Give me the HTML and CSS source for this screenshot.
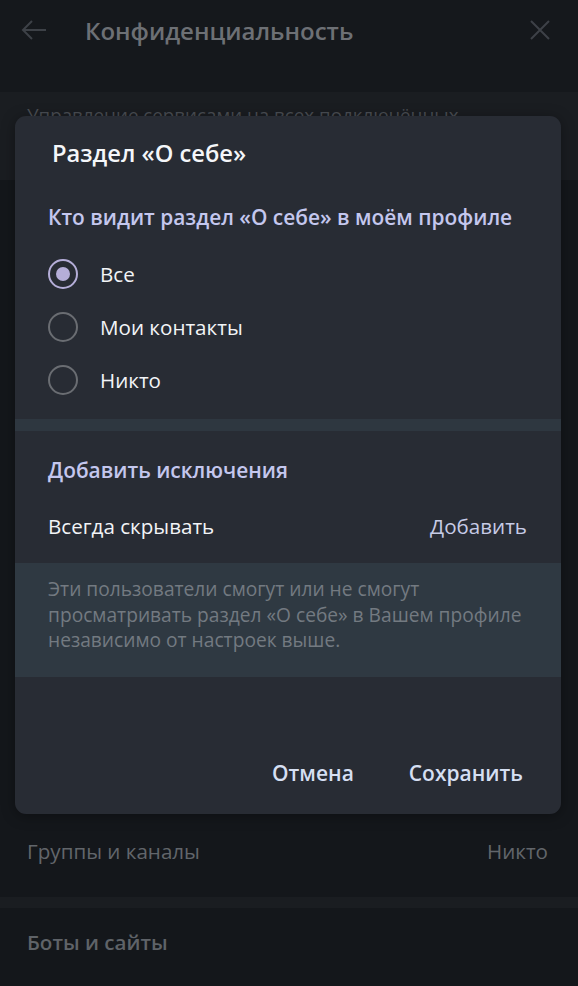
FILE: index.html
```html
<!DOCTYPE html>
<html lang="ru">
<head>
<meta charset="utf-8">
<title>Конфиденциальность</title>
<link rel="stylesheet" href="styles.css">
</head>
<body>
<div class="page">
  <header class="topbar">
    <svg class="icon back" width="26" height="22" viewBox="0 0 26 22"><path d="M25 11H2M11 2L2 11l9 9" fill="none" stroke="#3d4147" stroke-width="2"/></svg>
    <div class="topbar-title">Конфиденциальность</div>
    <svg class="icon close" width="20" height="20" viewBox="0 0 20 20"><path d="M1 1L19 19M19 1L1 19" fill="none" stroke="#3d4147" stroke-width="2"/></svg>
  </header>
  <div class="spacer"></div>
  <section class="band">
    <p class="band-text">Управление сервисами на всех подключённых</p>
  </section>
  <section class="list">
    <div class="list-row">
      <span>Группы и каналы</span>
      <span class="list-value">Никто</span>
    </div>
  </section>
  <div class="sep"></div>
  <section class="bots">
    <div class="bots-title">Боты и сайты</div>
  </section>
</div>

<div class="dialog">
  <h2 class="dialog-title">Раздел «О себе»</h2>
  <div class="section-label first">Кто видит раздел «О себе» в моём профиле</div>
  <div class="radios">
    <div class="radio-row"><span class="radio checked"></span><span>Все</span></div>
    <div class="radio-row"><span class="radio"></span><span>Мои контакты</span></div>
    <div class="radio-row"><span class="radio"></span><span>Никто</span></div>
  </div>
  <div class="divider"></div>
  <div class="section-label second">Добавить исключения</div>
  <div class="exc-row">
    <span>Всегда скрывать</span>
    <span class="exc-action">Добавить</span>
  </div>
  <div class="info">Эти пользователи смогут или не смогут просматривать раздел «О себе» в Вашем профиле независимо от настроек выше.</div>
  <div class="buttons">
    <span class="btn">Отмена</span>
    <span class="btn">Сохранить</span>
  </div>
</div>
</body>
</html>
```

FILE: styles.css
```css
* { box-sizing: border-box; }
html, body { margin: 0; padding: 0; }
body {
  width: 578px;
  height: 986px;
  overflow: hidden;
  background: #14171b;
  font-family: "Open Sans", "DejaVu Sans", sans-serif;
  position: relative;
}
.page {
  display: flex;
  flex-direction: column;
  height: 986px;
}
.topbar {
  height: 60px;
  display: flex;
  align-items: center;
  padding: 0 28px 0 21px;
  background: #15181c;
}
.topbar .back { flex: none; }
.topbar-title {
  margin-left: 38px;
  flex: 1;
  font-size: 24px;
  font-weight: 600;
  color: #6d7075;
}
.spacer { height: 32px; background: #15181c; }
.band {
  height: 88px;
  background: #1a1d21;
  padding: 10px 40px 0 27px;
}
.band-text {
  margin: 0;
  font-size: 18.75px;
  line-height: 26px;
  color: #4a4e54;
  white-space: nowrap;
}
.list {
  flex: 1;
  display: flex;
  flex-direction: column;
  justify-content: flex-end;
  background: #14171b;
  padding-bottom: 33px;
}
.list-row {
  display: flex;
  justify-content: space-between;
  padding: 0 30px 0 27px;
  font-size: 20.6px;
  color: #62666b;
  line-height: 26px;
}
.sep { height: 11px; background: #1a1d21; }
.bots {
  height: 78px;
  padding: 21px 27px 0;
}
.bots-title {
  font-size: 20.6px;
  font-weight: 600;
  color: #5f6368;
  line-height: 26px;
}
.dialog {
  position: absolute;
  left: 15px;
  top: 116px;
  width: 546px;
  height: 698px;
  background: #282c34;
  border-radius: 11px;
  box-shadow: 0 2px 14px rgba(0, 0, 0, 0.35);
  display: flex;
  flex-direction: column;
  overflow: hidden;
}
.dialog-title {
  margin: 23px 0 0 37px;
  font-size: 23.7px;
  font-weight: 600;
  line-height: 28px;
  color: #f4f6f9;
}
.section-label {
  padding-left: 33px;
  font-size: 20.9px;
  font-weight: 600;
  line-height: 24px;
  color: #c4c7ee;
}
.section-label.first { margin-top: 38px; }
.section-label.second { margin-top: 27px; }
.radios {
  margin-top: 18px;
  padding-bottom: 13px;
}
.radio-row {
  height: 53px;
  display: flex;
  align-items: center;
  padding-left: 33px;
  gap: 22px;
  font-size: 20.6px;
  color: #f2f4f7;
}
.radio {
  width: 30px;
  height: 30px;
  border-radius: 50%;
  border: 2.5px solid #6a6d72;
  display: flex;
  align-items: center;
  justify-content: center;
  flex: none;
}
.radio.checked { border-color: #b5aed8; }
.radio.checked::after {
  content: "";
  width: 14px;
  height: 14px;
  border-radius: 50%;
  background: #b5aed8;
}
.divider { height: 12px; background: #2e3740; }
.exc-row {
  display: flex;
  justify-content: space-between;
  padding: 32px 34px 25px 33px;
  font-size: 20.6px;
  line-height: 24px;
  color: #f2f4f7;
}
.exc-action { color: #c6cbe6; }
.info {
  background: #2f3942;
  padding: 13px 28px 24px 33px;
  font-size: 19.2px;
  line-height: 25.5px;
  color: #737a81;
  height: 114px;
}
.buttons {
  margin-top: auto;
  display: flex;
  justify-content: flex-end;
  gap: 55px;
  padding: 0 38px 29px 0;
  font-size: 21px;
  font-weight: 600;
  line-height: 24px;
  color: #d5dff2;
}
```
